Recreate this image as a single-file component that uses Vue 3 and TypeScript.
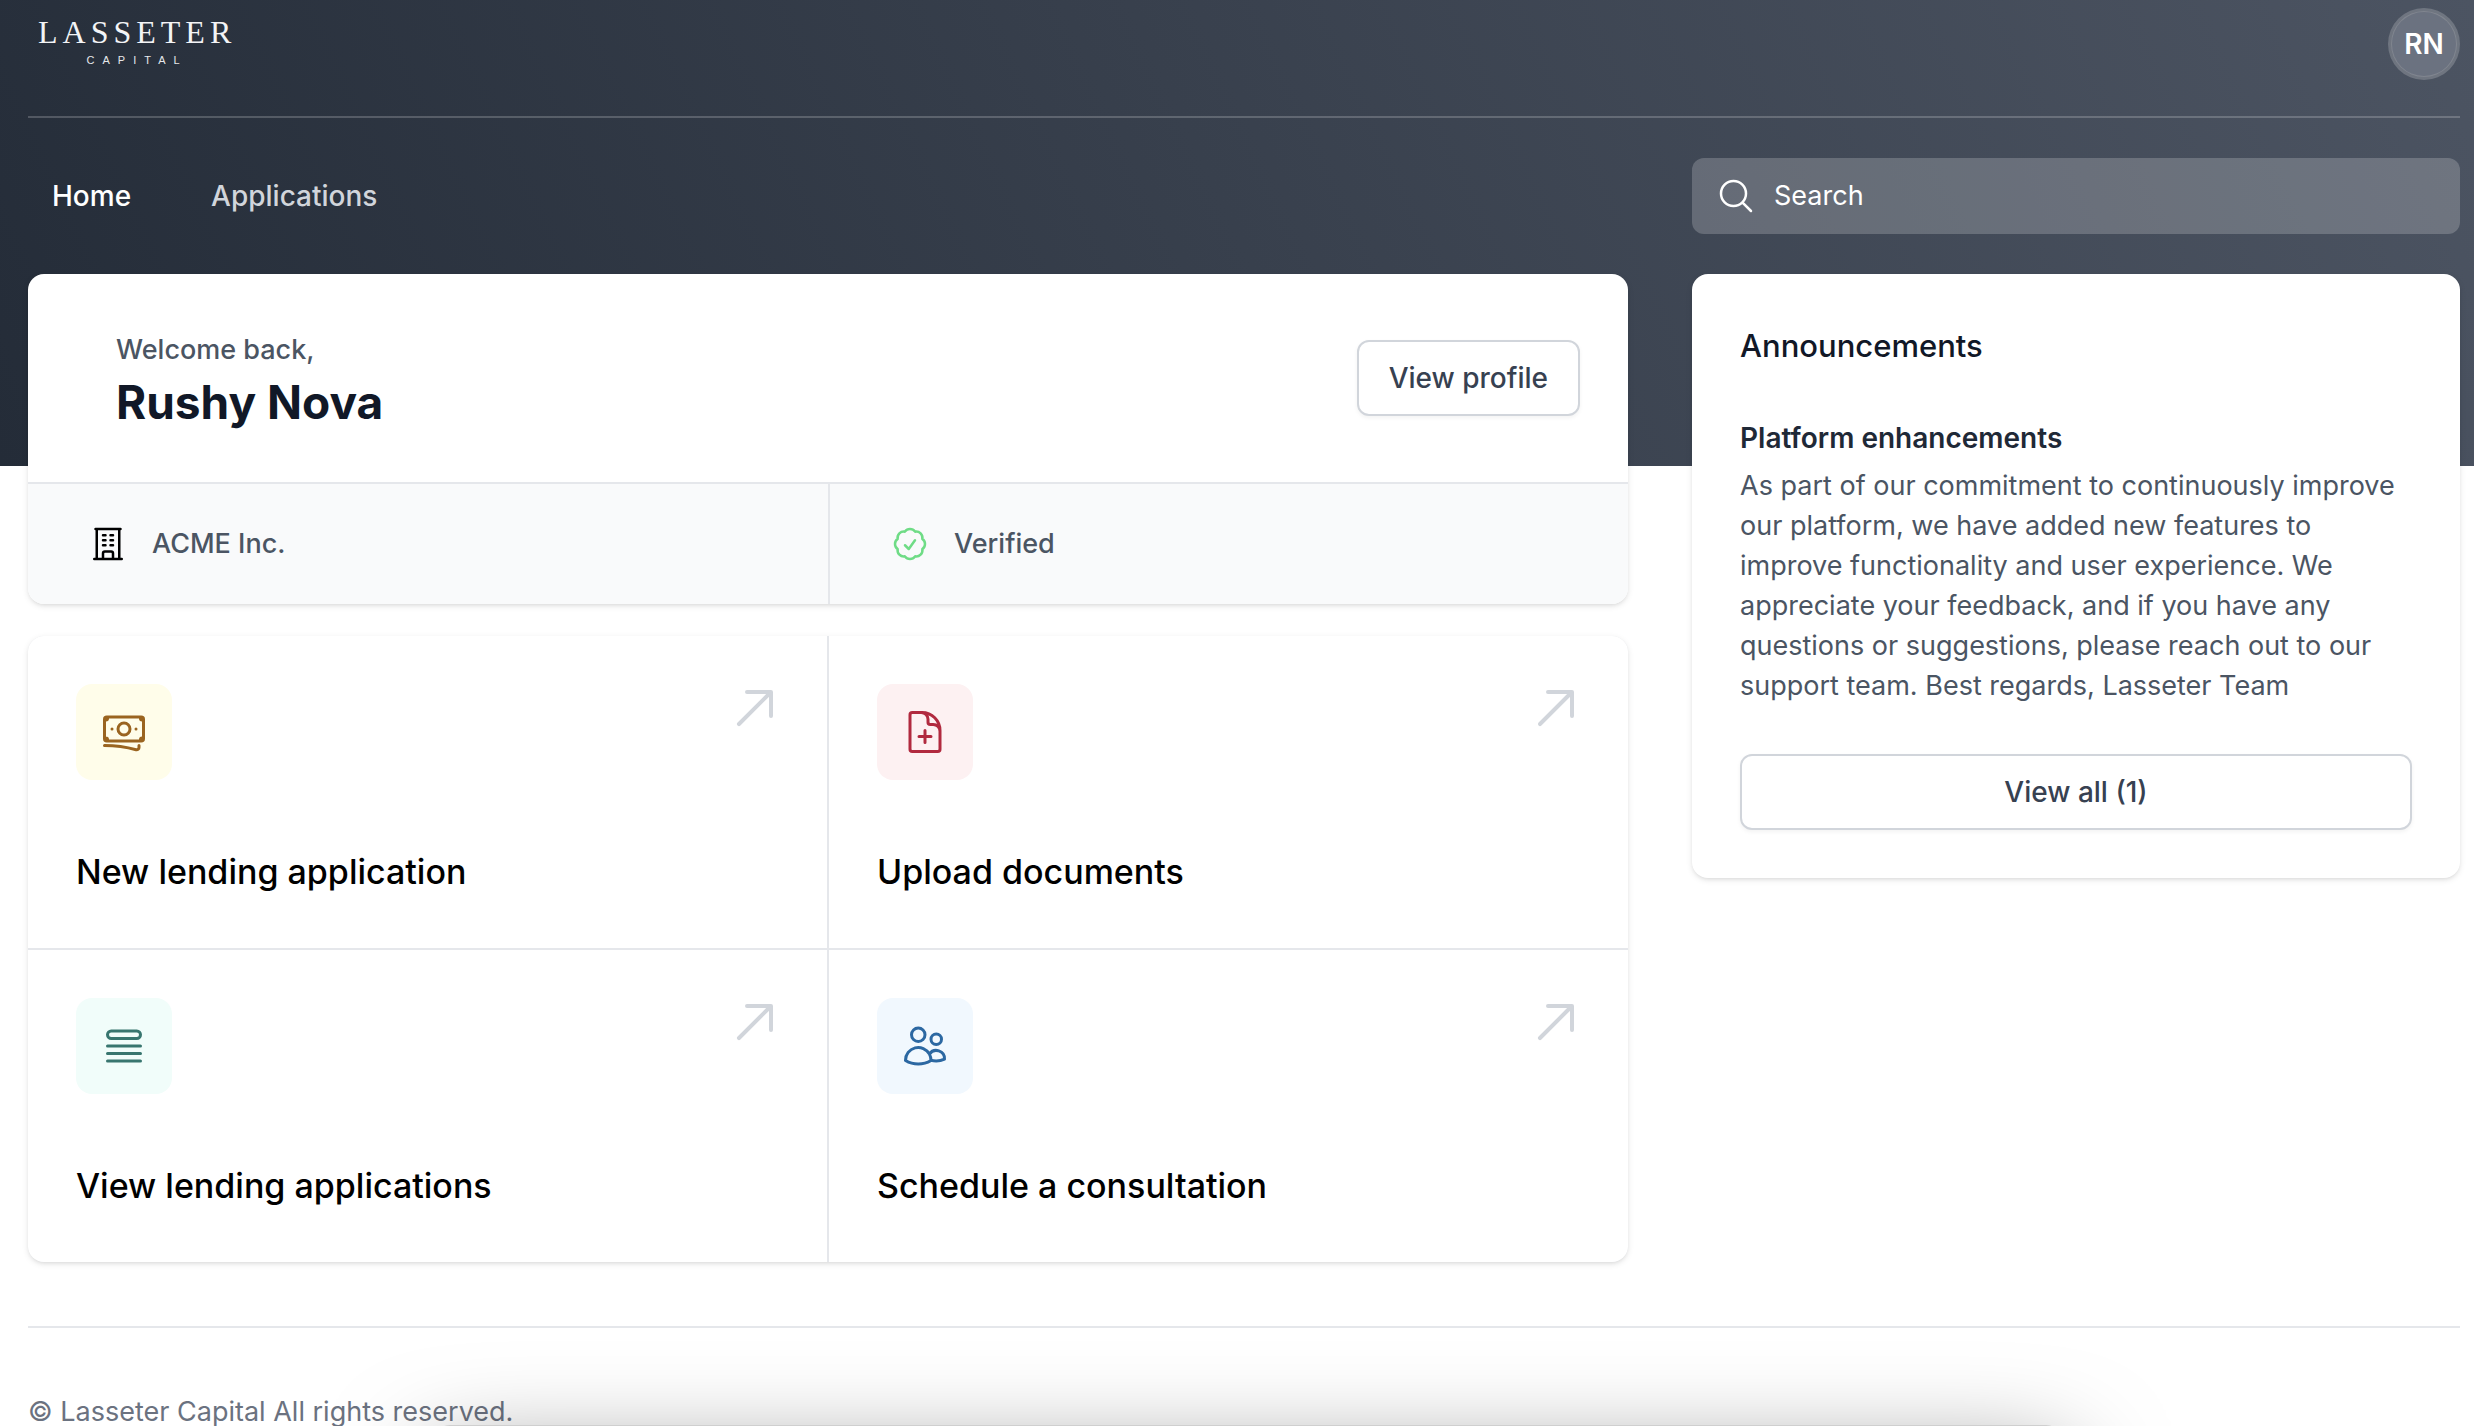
<script setup lang="ts">
import { ref } from 'vue'

interface NavItem {
  label: string
  current: boolean
}

interface Action {
  title: string
  tone: string
  icon: string
}

const query = ref('')

const navItems: NavItem[] = [
  { label: 'Home', current: true },
  { label: 'Applications', current: false },
]

const stats = [
  {
    label: 'ACME Inc.',
    tone: 'company',
    icon: 'M3.75 21h16.5M4.5 3h15M5.25 3v18m13.5-18v18M9 6.75h1.5m-1.5 3h1.5m-1.5 3h1.5m3-6H15m-1.5 3H15m-1.5 3H15M9 21v-3.375c0-.621.504-1.125 1.125-1.125h3.75c.621 0 1.125.504 1.125 1.125V21',
  },
  {
    label: 'Verified',
    tone: 'verified',
    icon: 'M9 12.75L11.25 15 15 9.75M21 12c0 1.268-.63 2.39-1.593 3.068a3.745 3.745 0 01-1.043 3.296 3.745 3.745 0 01-3.296 1.043A3.745 3.745 0 0112 21c-1.268 0-2.39-.63-3.068-1.593a3.746 3.746 0 01-3.296-1.043 3.745 3.745 0 01-1.043-3.296A3.745 3.745 0 013 12c0-1.268.63-2.39 1.593-3.068a3.745 3.745 0 011.043-3.296 3.746 3.746 0 013.296-1.043A3.746 3.746 0 0112 3c1.268 0 2.39.63 3.068 1.593a3.746 3.746 0 013.296 1.043 3.746 3.746 0 011.043 3.296A3.745 3.745 0 0121 12z',
  },
]

const actions: Action[] = [
  {
    title: 'New lending application',
    tone: 'yellow',
    icon: 'M2.25 18.75a60.07 60.07 0 0115.797 2.101c.727.198 1.453-.342 1.453-1.096V18.75M3.75 4.5v.75A.75.75 0 013 6h-.75m0 0v-.375c0-.621.504-1.125 1.125-1.125H20.25M2.25 6v9m18-10.5v.75c0 .414.336.75.75.75h.75m-1.5-1.5h.375c.621 0 1.125.504 1.125 1.125v9.75c0 .621-.504 1.125-1.125 1.125h-.375m1.5-1.5H21a.75.75 0 00-.75.75v.75m0 0H3.75m0 0h-.375a1.125 1.125 0 01-1.125-1.125V15m1.5 1.5v-.75A.75.75 0 003 15h-.75M15 10.5a3 3 0 11-6 0 3 3 0 016 0zm3 0h.008v.008H18V10.5zm-12 0h.008v.008H6V10.5z',
  },
  {
    title: 'Upload documents',
    tone: 'red',
    icon: 'M19.5 14.25v-2.625a3.375 3.375 0 00-3.375-3.375h-1.5A1.125 1.125 0 0113.5 7.125v-1.5a3.375 3.375 0 00-3.375-3.375H8.25m3.75 9v6m3-3H9m1.5-12H5.625c-.621 0-1.125.504-1.125 1.125v17.25c0 .621.504 1.125 1.125 1.125h12.75c.621 0 1.125-.504 1.125-1.125V11.25a9 9 0 00-9-9z',
  },
  {
    title: 'View lending applications',
    tone: 'teal',
    icon: 'M3.75 12h16.5m-16.5 3.75h16.5M3.75 19.5h16.5M5.625 4.5h12.75a1.875 1.875 0 010 3.75H5.625a1.875 1.875 0 010-3.75z',
  },
  {
    title: 'Schedule a consultation',
    tone: 'blue',
    icon: 'M15 19.128a9.38 9.38 0 002.625.372 9.337 9.337 0 004.121-.952 4.125 4.125 0 00-7.533-2.493M15 19.128v-.003c0-1.113-.285-2.16-.786-3.07M15 19.128v.106A12.318 12.318 0 018.624 21c-2.331 0-4.512-.645-6.374-1.766l-.001-.109a6.375 6.375 0 0111.964-3.07M12 6.375a3.375 3.375 0 11-6.75 0 3.375 3.375 0 016.75 0zm8.25 2.25a2.625 2.625 0 11-5.25 0 2.625 2.625 0 015.25 0z',
  },
]
</script>

<template>
  <div class="page">
    <header class="hero">
      <div class="topbar">
        <a class="logo" href="#" aria-label="Lasseter Capital">
          <span class="logo-name">LASSETER</span>
          <span class="logo-sub">CAPITAL</span>
        </a>
        <button class="avatar" type="button"><span class="avatar-face">RN</span></button>
      </div>
      <div class="navbar columns">
        <nav class="nav">
          <a
            v-for="item in navItems"
            :key="item.label"
            href="#"
            class="nav-link"
            :class="{ current: item.current }"
            :aria-current="item.current ? 'page' : undefined"
          >{{ item.label }}</a>
        </nav>
        <label class="search">
          <svg class="icon" viewBox="0 0 24 24" aria-hidden="true">
            <path d="M21 21l-5.197-5.197m0 0A7.5 7.5 0 105.196 5.196a7.5 7.5 0 0010.607 10.607z" />
          </svg>
          <input v-model="query" class="search-input" type="search" placeholder="Search" aria-label="Search" />
        </label>
      </div>
    </header>

    <main class="main columns">
      <div class="primary">
        <section class="card">
          <div class="welcome">
            <div class="greeting">
              <p class="greeting-line">Welcome back,</p>
              <h1 class="greeting-name">Rushy Nova</h1>
            </div>
            <button class="button" type="button">View profile</button>
          </div>
          <div class="stats">
            <div v-for="stat in stats" :key="stat.label" class="stat">
              <svg class="icon" :class="stat.tone" viewBox="0 0 24 24" aria-hidden="true">
                <path :d="stat.icon" />
              </svg>
              <span>{{ stat.label }}</span>
            </div>
          </div>
        </section>

        <section class="card actions">
          <a v-for="action in actions" :key="action.title" href="#" class="action">
            <span class="action-top">
              <span class="tile" :class="action.tone">
                <svg class="icon large" viewBox="0 0 24 24" aria-hidden="true">
                  <path :d="action.icon" />
                </svg>
              </span>
              <svg class="arrow" viewBox="0 0 24 24" aria-hidden="true">
                <path d="M20 4h1a1 1 0 00-1-1v1zm-1 12a1 1 0 102 0h-2zM8 3a1 1 0 000 2V3zM3.293 19.293a1 1 0 101.414 1.414l-1.414-1.414zM19 4v12h2V4h-2zm1-1H8v2h12V3zm-.707.293l-16 16 1.414 1.414 16-16-1.414-1.414z" />
              </svg>
            </span>
            <span class="action-title">{{ action.title }}</span>
          </a>
        </section>
      </div>

      <aside class="card news">
        <h2 class="news-heading">Announcements</h2>
        <h3 class="news-title">Platform enhancements</h3>
        <p class="news-body">
          As part of our commitment to continuously improve our platform, we have added new features to
          improve functionality and user experience. We appreciate your feedback, and if you have any
          questions or suggestions, please reach out to our support team. Best regards, Lasseter Team
        </p>
        <button class="button wide" type="button">View all (1)</button>
      </aside>
    </main>

    <footer class="footer">© Lasseter Capital All rights reserved.</footer>
    <div class="sheet-shadow" aria-hidden="true"></div>
  </div>
</template>

<style>
html {
  scrollbar-width: none;
}

body {
  background: #fff;
}
</style>

<style scoped>
.page {
  font-family: Inter, 'Liberation Sans', sans-serif;
  font-size: 27px;
  line-height: 40px;
  color: #4b5563;
}

.page *,
.page {
  box-sizing: border-box;
}

h1,
h2,
h3,
p {
  margin: 0;
}

a {
  color: inherit;
  text-decoration: none;
}

.hero {
  padding: 0 14px 232px 28px;
  background: linear-gradient(65deg, #242c38, #4c5462);
}

.columns {
  display: grid;
  grid-template-columns: repeat(3, minmax(0, 1fr));
  column-gap: 64px;
  align-items: start;
}

.topbar {
  display: flex;
  justify-content: space-between;
  align-items: flex-start;
  padding: 8px 0 36px;
  border-bottom: 2px solid rgba(255, 255, 255, 0.2);
}

.logo {
  display: flex;
  flex-direction: column;
  align-items: center;
  padding: 4px 10px 0;
  color: #f3f4f6;
}

.logo-name {
  font-family: 'Liberation Serif', serif;
  font-size: 32px;
  line-height: 40px;
  letter-spacing: 5px;
}

.logo-sub {
  font-family: 'Liberation Sans', sans-serif;
  font-size: 11px;
  line-height: 16px;
  letter-spacing: 8px;
  color: #e5e7eb;
}

.avatar {
  width: 72px;
  height: 72px;
  padding: 4px;
  border: 0;
  border-radius: 50%;
  background: rgba(255, 255, 255, 0.2);
}

.avatar-face {
  display: flex;
  align-items: center;
  justify-content: center;
  height: 64px;
  border-radius: 50%;
  background: #6b7280;
  box-shadow: 0 0 0 1px rgba(255, 255, 255, 0.12);
  color: #fff;
  font-family: Inter, 'Liberation Sans', sans-serif;
  font-size: 28px;
  font-weight: 600;
}

.navbar {
  padding-top: 40px;
}

.nav {
  grid-column: span 2;
  display: flex;
  align-items: center;
  gap: 32px;
  height: 76px;
}

.nav-link {
  padding: 16px 24px;
  font-size: 28px;
  font-weight: 500;
  color: #d1d5db;
}

.nav-link.current {
  color: #fff;
}

.search {
  display: flex;
  align-items: center;
  gap: 18px;
  height: 76px;
  padding: 0 24px;
  border-radius: 12px;
  background: rgba(255, 255, 255, 0.2);
  color: #fff;
}

.search-input {
  flex: 1;
  min-width: 0;
  height: 40px;
  padding: 0;
  border: 0;
  outline: 0;
  appearance: none;
  background: transparent;
  color: #fff;
  font: inherit;
}

.search-input::placeholder {
  color: #fff;
  opacity: 1;
}

.icon {
  flex: none;
  width: 40px;
  height: 40px;
  fill: none;
  stroke: currentColor;
  stroke-width: 1.5;
  stroke-linecap: round;
  stroke-linejoin: round;
}

.icon.large {
  width: 48px;
  height: 48px;
}

.main {
  margin-top: -192px;
  padding: 0 14px 64px 28px;
}

.primary {
  grid-column: span 2;
  display: grid;
  gap: 32px;
}

.card {
  overflow: hidden;
  border-radius: 16px;
  background: #fff;
  box-shadow: 0 2px 6px rgba(0, 0, 0, 0.1), 0 2px 4px -2px rgba(0, 0, 0, 0.1);
}

.welcome {
  display: flex;
  align-items: center;
  justify-content: space-between;
  padding: 48px;
}

.greeting {
  padding: 8px 0 0 40px;
}

.greeting-line {
  font-weight: 500;
}

.greeting-name {
  font-size: 46px;
  line-height: 64px;
  font-weight: 700;
  color: #111827;
}

.button {
  height: 76px;
  padding: 0 30px;
  border: 2px solid #d1d5db;
  border-radius: 12px;
  background: #fff;
  box-shadow: 0 2px 4px rgba(0, 0, 0, 0.05);
  color: #374151;
  font-family: inherit;
  font-size: 28px;
  line-height: 40px;
  font-weight: 500;
}

.button.wide {
  width: 100%;
}

.stats {
  display: grid;
  grid-template-columns: 1fr 1fr;
  border-top: 2px solid #e5e7eb;
  background: #f9fafb;
}

.stat {
  display: flex;
  align-items: center;
  gap: 24px;
  padding: 40px 60px;
  font-weight: 500;
}

.stat + .stat {
  border-left: 2px solid #e5e7eb;
}

.company {
  color: #000;
}

.verified {
  color: #6fdc86;
}

.actions {
  display: grid;
  grid-template-columns: 1fr 1fr;
  gap: 2px;
  background: #e5e7eb;
}

.action {
  display: flex;
  flex-direction: column;
  gap: 64px;
  padding: 48px;
  background: #fff;
}

.action-top {
  display: flex;
  justify-content: space-between;
  align-items: flex-start;
}

.tile {
  display: flex;
  padding: 24px;
  border-radius: 16px;
}

.yellow {
  background: #fffdea;
  color: #9a6420;
}

.red {
  background: #fdf1f2;
  color: #b12a3f;
}

.teal {
  background: #f1fdfa;
  color: #38766f;
}

.blue {
  background: #f1f8fe;
  color: #2c68a2;
}

.arrow {
  width: 48px;
  height: 48px;
  fill: #d1d5db;
}

.action-title {
  font-size: 34px;
  line-height: 56px;
  font-weight: 500;
  color: #000;
}

.news {
  padding: 48px;
}

.news-heading {
  margin-bottom: 48px;
  font-size: 31px;
  line-height: 48px;
  font-weight: 500;
  color: #111827;
}

.news-title {
  margin-bottom: 8px;
  font-size: 28px;
  line-height: 40px;
  font-weight: 600;
  color: #1f2937;
}

.news-body {
  margin-bottom: 48px;
}

.footer {
  margin: 0 14px 0 28px;
  padding: 64px 0;
  border-top: 2px solid #e5e7eb;
  color: #6b7280;
}

/* Shade cast by the sheet docked below the lower edge of the window. */
.sheet-shadow {
  position: fixed;
  left: 430px;
  right: 408px;
  bottom: -399px;
  height: 400px;
  border-radius: 20px;
  background: #cfcfcf;
  box-shadow: 0 36px 100px rgba(0, 0, 0, 0.5);
  pointer-events: none;
}
</style>
